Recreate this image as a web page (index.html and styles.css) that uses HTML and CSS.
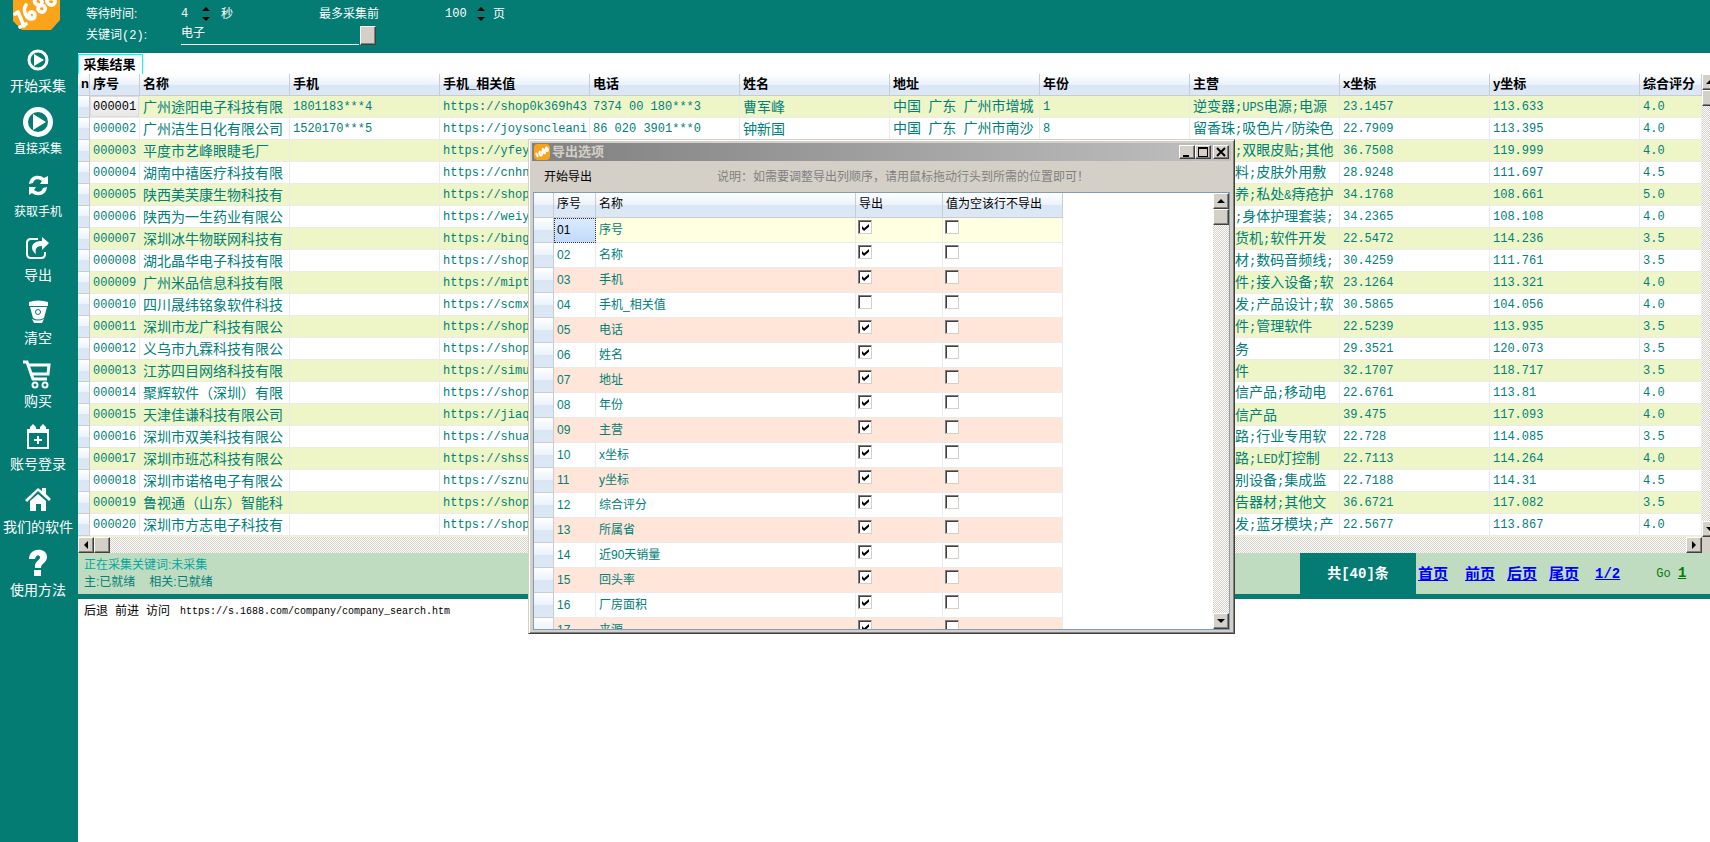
FILE: index.html
```html
<!DOCTYPE html>
<html lang="zh-CN">
<head>
<meta charset="utf-8">
<title>采集结果</title>
<link rel="stylesheet" href="styles.css">
</head>
<body>
<div class="app">
<nav class="side">
  <svg class="logo" width="48" height="30" viewBox="0 0 48 30" aria-hidden="true"><path d="M0 0H47V20L38 30H9L0 21Z" fill="#faa41c"/><g fill="none" stroke="#fff" stroke-width="3.600" stroke-linecap="round" stroke-linejoin="round"><path d="M2 14L5 12L11 26M7 27L13 24"/><path d="M13 5C9 11 14 19 18 19C23 19 23 12 19 12C16 12 15 14 17 17"/><path d="M24 -2C19 1 23 6 27 5C31 3 28 -2 24 -2M27 6C23 8 26 13 30 12C35 9 31 4 27 6"/><path d="M34 -5C32 3 37 7 41 4C44 1 40 -3 36 -1"/></g></svg>
  <ul class="menu">
    <li><button type="button"><svg viewBox="0 0 32 32"><circle cx="16" cy="16" r="9" fill="none" stroke="#fff" stroke-width="3"/><path d="M12 10L22 16L12 22Z"/></svg><span>开始采集</span></button></li>
    <li><button type="button" class="small"><svg viewBox="0 0 32 32"><circle cx="16" cy="15" r="12.500" fill="none" stroke="#fff" stroke-width="5"/><path d="M11 7L24 15L11 23Z"/></svg><span>直接采集</span></button></li>
    <li><button type="button" class="small"><svg viewBox="0 0 32 32"><path d="M7 14C8 5 17 4 22 8L26 6V14H18L20 11C16 8 12 9 11 13ZM25 17C24 26 15 27 10 23L7 25V17H14L12 20C16 23 20 22 21 18Z"/></svg><span>获取手机</span></button></li>
    <li><button type="button"><svg viewBox="0 0 32 32"><path d="M16 6H9Q5 6 5 10V21Q5 25 9 25H19Q23 25 23 21V19" fill="none" stroke="#fff" stroke-width="2"/><path d="M20 4L27 10L20 17V13C14 13 13 16 14 21C8 17 8 8 20 8Z"/></svg><span>导出</span></button></li>
    <li><button type="button"><svg viewBox="0 0 32 32"><path d="M7 6Q16 3 26 6V10H7ZM8 11H25L22 22Q16 25 11 22ZM10 23Q16 26 22 23L20 27H12Z"/><circle cx="16" cy="16" r="2.500" fill="none" stroke="#047c74" stroke-width="1"/></svg><span>清空</span></button></li>
    <li><button type="button"><svg viewBox="0 0 32 32"><path d="M1 3H5L11 20H25" fill="none" stroke="#fff" stroke-width="3"/><path d="M7 6H27L26 15H10" fill="none" stroke="#fff" stroke-width="3"/><circle cx="13" cy="26" r="2.500" fill="none" stroke="#fff" stroke-width="2"/><circle cx="23" cy="26" r="2.500" fill="none" stroke="#fff" stroke-width="2"/></svg><span>购买</span></button></li>
    <li><button type="button"><svg viewBox="0 0 32 32"><path d="M6 8H26V26H6Z" fill="none" stroke="#fff" stroke-width="2"/><path d="M5 7H27V11H5ZM8 5L11 2L14 5V8H8ZM18 5L21 2L24 5V8H18Z"/><path d="M16 14V22M12 18H20" stroke="#fff" stroke-width="2"/></svg><span>账号登录</span></button></li>
    <li><button type="button"><svg viewBox="0 0 32 32"><path d="M3 15L16 3L20 6V3H24V9L29 14L27 16L16 6L5 17ZM8 16L16 9L24 16V26H19V19H14V26H8Z"/></svg><span>我们的软件</span></button></li>
    <li><button type="button"><svg viewBox="0 0 32 32"><path d="M7 11C7 -1 25 -1 25 9C25 15 19 15 19 20H13C12 13 19 12 18 9C17 6 14 7 13 11ZM12 22H19V28H12Z"/></svg><span>使用方法</span></button></li>
  </ul>
</nav>
<main class="main">
  <form class="top">
    <label for="wait">等待时间:</label>
    <div class="field"><input id="wait" class="num" value="4"><button type="button" class="spin" aria-label="调整等待时间"><svg width="8" height="14" viewBox="0 0 8 14"><path d="M0 4L4 0L8 4ZM0 10H8L4 14Z"/></svg></button><span>秒</span></div>
    <label for="pages">最多采集前</label>
    <div class="field"><input id="pages" class="num" value="100"><button type="button" class="spin" aria-label="调整页数"><svg width="8" height="14" viewBox="0 0 8 14"><path d="M0 4L4 0L8 4ZM0 10H8L4 14Z"/></svg></button><span>页</span></div>
    <label for="kw">关键词<span class="en">(2)</span>:</label>
    <div class="field kw"><input id="kw" value="电子"><button type="button" class="bevel pick" aria-label="选择关键词"></button></div>
  </form>
  <div class="tabs"><button type="button" class="tab">采集结果</button></div>
  <section class="results">
    <div class="grid">
    <table class="data">
      <colgroup><col class="c-n"><col class="c-id"><col><col><col><col><col><col><col><col><col><col><col class="c-last"></colgroup>
      <thead><tr><th class="n">n</th><th>序号</th><th>名称</th><th>手机</th><th>手机_相关值</th><th>电话</th><th>姓名</th><th>地址</th><th>年份</th><th>主营</th><th>x坐标</th><th>y坐标</th><th>综合评分</th></tr></thead>
      <tbody>
      <tr><td></td><td class="en cur">000001</td><td>广州途阳电子科技有限</td><td class="en">1801183***4</td><td class="en">https://shop0k369h43</td><td class="en">7374 00 180***3</td><td>曹军峰</td><td>中国<span class="en"> </span>广东<span class="en"> </span>广州市增城</td><td class="en">1</td><td>逆变器<span class="en">;UPS</span>电源<span class="en">;</span>电源</td><td class="en">23.1457</td><td class="en">113.633</td><td class="en">4.0</td></tr>
      <tr><td></td><td class="en">000002</td><td>广州洁生日化有限公司</td><td class="en">1520170***5</td><td class="en">https://joysoncleani</td><td class="en">86 020 3901***0</td><td>钟新国</td><td>中国<span class="en"> </span>广东<span class="en"> </span>广州市南沙</td><td class="en">8</td><td>留香珠<span class="en">;</span>吸色片<span class="en">/</span>防染色</td><td class="en">22.7909</td><td class="en">113.395</td><td class="en">4.0</td></tr>
      <tr><td></td><td class="en">000003</td><td>平度市艺峰眼睫毛厂</td><td></td><td class="en">https://yfey</td><td></td><td></td><td></td><td></td><td>假睫毛<span class="en">;</span>双眼皮贴<span class="en">;</span>其他</td><td class="en">36.7508</td><td class="en">119.999</td><td class="en">4.0</td></tr>
      <tr><td></td><td class="en">000004</td><td>湖南中禧医疗科技有限</td><td></td><td class="en">https://cnhn</td><td></td><td></td><td></td><td></td><td>医用敷料<span class="en">;</span>皮肤外用敷</td><td class="en">28.9248</td><td class="en">111.697</td><td class="en">4.5</td></tr>
      <tr><td></td><td class="en">000005</td><td>陕西美芙康生物科技有</td><td></td><td class="en">https://shop</td><td></td><td></td><td></td><td></td><td>女性保养<span class="en">;</span>私处<span class="en">&amp;</span>痔疮护</td><td class="en">34.1768</td><td class="en">108.661</td><td class="en">5.0</td></tr>
      <tr><td></td><td class="en">000006</td><td>陕西为一生药业有限公</td><td></td><td class="en">https://weiy</td><td></td><td></td><td></td><td></td><td>护发素<span class="en">;</span>身体护理套装<span class="en">;</span></td><td class="en">34.2365</td><td class="en">108.108</td><td class="en">4.0</td></tr>
      <tr><td></td><td class="en">000007</td><td>深圳冰牛物联网科技有</td><td></td><td class="en">https://bingn</td><td></td><td></td><td></td><td></td><td>自动售货机<span class="en">;</span>软件开发</td><td class="en">22.5472</td><td class="en">114.236</td><td class="en">3.5</td></tr>
      <tr><td></td><td class="en">000008</td><td>湖北晶华电子科技有限</td><td></td><td class="en">https://shop</td><td></td><td></td><td></td><td></td><td>音响器材<span class="en">;</span>数码音频线<span class="en">;</span></td><td class="en">30.4259</td><td class="en">111.761</td><td class="en">3.5</td></tr>
      <tr><td></td><td class="en">000009</td><td>广州米品信息科技有限</td><td></td><td class="en">https://mipt</td><td></td><td></td><td></td><td></td><td>网络配件<span class="en">;</span>接入设备<span class="en">;</span>软</td><td class="en">23.1264</td><td class="en">113.321</td><td class="en">4.0</td></tr>
      <tr><td></td><td class="en">000010</td><td>四川晟纬铭象软件科技</td><td></td><td class="en">https://scmxl</td><td></td><td></td><td></td><td></td><td>软件开发<span class="en">;</span>产品设计<span class="en">;</span>软</td><td class="en">30.5865</td><td class="en">104.056</td><td class="en">4.0</td></tr>
      <tr><td></td><td class="en">000011</td><td>深圳市龙广科技有限公</td><td></td><td class="en">https://shop5</td><td></td><td></td><td></td><td></td><td>办公软件<span class="en">;</span>管理软件</td><td class="en">22.5239</td><td class="en">113.935</td><td class="en">3.5</td></tr>
      <tr><td></td><td class="en">000012</td><td>义乌市九霖科技有限公</td><td></td><td class="en">https://shop0</td><td></td><td></td><td></td><td></td><td>技术服务</td><td class="en">29.3521</td><td class="en">120.073</td><td class="en">3.5</td></tr>
      <tr><td></td><td class="en">000013</td><td>江苏四目网络科技有限</td><td></td><td class="en">https://simu</td><td></td><td></td><td></td><td></td><td>应用软件</td><td class="en">32.1707</td><td class="en">118.717</td><td class="en">3.5</td></tr>
      <tr><td></td><td class="en">000014</td><td>聚辉软件（深圳）有限</td><td></td><td class="en">https://shop</td><td></td><td></td><td></td><td></td><td>其他通信产品<span class="en">;</span>移动电</td><td class="en">22.6761</td><td class="en">113.81</td><td class="en">4.0</td></tr>
      <tr><td></td><td class="en">000015</td><td>天津佳谦科技有限公司</td><td></td><td class="en">https://jiaq</td><td></td><td></td><td></td><td></td><td>其他通信产品</td><td class="en">39.475</td><td class="en">117.093</td><td class="en">4.0</td></tr>
      <tr><td></td><td class="en">000016</td><td>深圳市双美科技有限公</td><td></td><td class="en">https://shuan</td><td></td><td></td><td></td><td></td><td>集成电路<span class="en">;</span>行业专用软</td><td class="en">22.728</td><td class="en">114.085</td><td class="en">3.5</td></tr>
      <tr><td></td><td class="en">000017</td><td>深圳市班芯科技有限公</td><td></td><td class="en">https://shssl</td><td></td><td></td><td></td><td></td><td>集成电路<span class="en">;LED</span>灯控制</td><td class="en">22.7113</td><td class="en">114.264</td><td class="en">4.0</td></tr>
      <tr><td></td><td class="en">000018</td><td>深圳市诺格电子有限公</td><td></td><td class="en">https://sznu</td><td></td><td></td><td></td><td></td><td>智能识别设备<span class="en">;</span>集成监</td><td class="en">22.7188</td><td class="en">114.31</td><td class="en">4.5</td></tr>
      <tr><td></td><td class="en">000019</td><td>鲁视通（山东）智能科</td><td></td><td class="en">https://shop</td><td></td><td></td><td></td><td></td><td>其他广告器材<span class="en">;</span>其他文</td><td class="en">36.6721</td><td class="en">117.082</td><td class="en">3.5</td></tr>
      <tr><td></td><td class="en">000020</td><td>深圳市方志电子科技有</td><td></td><td class="en">https://shop</td><td></td><td></td><td></td><td></td><td>软件开发<span class="en">;</span>蓝牙模块<span class="en">;</span>产</td><td class="en">22.5677</td><td class="en">113.867</td><td class="en">4.0</td></tr>
      </tbody>
    </table>
    </div>
    <div class="vbar"><button type="button" class="bevel sb" aria-label="向上"><svg width="8" height="4" viewBox="0 0 8 4"><path d="M0 4L4 0L8 4Z"/></svg></button><div class="bevel sb"></div><button type="button" class="bevel sb end" aria-label="向下"><svg width="8" height="4" viewBox="0 0 8 4"><path d="M0 0H8L4 4Z"/></svg></button></div>
    <div class="hbar"><button type="button" class="bevel sb" aria-label="向左"><svg width="4" height="8" viewBox="0 0 4 8"><path d="M4 0V8L0 4Z"/></svg></button><div class="bevel sb"></div><button type="button" class="bevel sb end" aria-label="向右"><svg width="4" height="8" viewBox="0 0 4 8"><path d="M0 0V8L4 4Z"/></svg></button></div>
    <div class="corner"></div>
  </section>
  <footer class="status">
    <div class="state"><p class="now">正在采集关键词:未采集</p><p class="ready"><span>主:已就绪</span><span>相关:已就绪</span></p></div>
    <div class="total">共<span class="en">[40]</span>条</div>
    <div class="pager"><a href="#first">首页</a><a href="#prev">前页</a><a href="#next">后页</a><a href="#last">尾页</a><a href="#page" class="en">1/2</a><span class="go en">Go <a href="#go">1</a></span></div>
  </footer>
  <div class="nav"><button type="button">后退</button><button type="button">前进</button><button type="button">访问</button><input aria-label="网址" value="https://s.1688.com/company/company_search.htm"></div>
</main>

<div class="dialog" role="dialog" aria-labelledby="dt">
  <div class="title"><svg width="16" height="16" viewBox="0 0 16 16" aria-hidden="true"><rect width="16" height="16" rx="4" fill="#faa41c"/><path d="M2 9L4 13M6 7C4 11 8 13 8 10S5 9 6 8M9 6C7 8 12 11 11 8S8 4 9 6M13 3C10 5 14 9 14 6S12 5 12 5" fill="none" stroke="#fff" stroke-width="2"/></svg><h2 id="dt">导出选项</h2>
    <button type="button" class="bevel" aria-label="最小化"><svg width="10" height="10" viewBox="0 0 10 10"><path d="M1 8H7V10H1Z"/></svg></button><button type="button" class="bevel" aria-label="最大化"><svg width="10" height="10" viewBox="0 0 10 10"><path d="M0 0H10V10H0ZM1 2V9H9V2Z" fill-rule="evenodd"/></svg></button><button type="button" class="bevel close" aria-label="关闭"><svg width="10" height="10" viewBox="0 0 10 10"><path d="M1 1L9 9M9 1L1 9" stroke="#000" stroke-width="2"/></svg></button>
  </div>
  <div class="tools"><button type="button">开始导出</button><p>说明：如需要调整导出列顺序，请用鼠标拖动行头到所需的位置即可！</p></div>
  <div class="frame">
    <div class="view">
    <table class="opts">
      <colgroup><col class="o-h"><col class="o-id"><col class="o-name"><col class="o-out"><col class="o-skip"></colgroup>
      <thead><tr><th></th><th>序号</th><th>名称</th><th>导出</th><th>值为空该行不导出</th></tr></thead>
      <tbody>
      <tr class="sel"><td></td><td>01</td><td>序号</td><td><input type="checkbox" checked aria-label="导出 序号"></td><td><input type="checkbox" aria-label="序号为空不导出"></td></tr>
      <tr><td></td><td>02</td><td>名称</td><td><input type="checkbox" checked aria-label="导出 名称"></td><td><input type="checkbox" aria-label="名称为空不导出"></td></tr>
      <tr><td></td><td>03</td><td>手机</td><td><input type="checkbox" checked aria-label="导出 手机"></td><td><input type="checkbox" aria-label="手机为空不导出"></td></tr>
      <tr><td></td><td>04</td><td>手机_相关值</td><td><input type="checkbox" aria-label="导出 手机_相关值"></td><td><input type="checkbox" aria-label="手机_相关值为空不导出"></td></tr>
      <tr><td></td><td>05</td><td>电话</td><td><input type="checkbox" checked aria-label="导出 电话"></td><td><input type="checkbox" aria-label="电话为空不导出"></td></tr>
      <tr><td></td><td>06</td><td>姓名</td><td><input type="checkbox" checked aria-label="导出 姓名"></td><td><input type="checkbox" aria-label="姓名为空不导出"></td></tr>
      <tr><td></td><td>07</td><td>地址</td><td><input type="checkbox" checked aria-label="导出 地址"></td><td><input type="checkbox" aria-label="地址为空不导出"></td></tr>
      <tr><td></td><td>08</td><td>年份</td><td><input type="checkbox" checked aria-label="导出 年份"></td><td><input type="checkbox" aria-label="年份为空不导出"></td></tr>
      <tr><td></td><td>09</td><td>主营</td><td><input type="checkbox" checked aria-label="导出 主营"></td><td><input type="checkbox" aria-label="主营为空不导出"></td></tr>
      <tr><td></td><td>10</td><td>x坐标</td><td><input type="checkbox" checked aria-label="导出 x坐标"></td><td><input type="checkbox" aria-label="x坐标为空不导出"></td></tr>
      <tr><td></td><td>11</td><td>y坐标</td><td><input type="checkbox" checked aria-label="导出 y坐标"></td><td><input type="checkbox" aria-label="y坐标为空不导出"></td></tr>
      <tr><td></td><td>12</td><td>综合评分</td><td><input type="checkbox" checked aria-label="导出 综合评分"></td><td><input type="checkbox" aria-label="综合评分为空不导出"></td></tr>
      <tr><td></td><td>13</td><td>所属省</td><td><input type="checkbox" checked aria-label="导出 所属省"></td><td><input type="checkbox" aria-label="所属省为空不导出"></td></tr>
      <tr><td></td><td>14</td><td>近90天销量</td><td><input type="checkbox" checked aria-label="导出 近90天销量"></td><td><input type="checkbox" aria-label="近90天销量为空不导出"></td></tr>
      <tr><td></td><td>15</td><td>回头率</td><td><input type="checkbox" checked aria-label="导出 回头率"></td><td><input type="checkbox" aria-label="回头率为空不导出"></td></tr>
      <tr><td></td><td>16</td><td>厂房面积</td><td><input type="checkbox" checked aria-label="导出 厂房面积"></td><td><input type="checkbox" aria-label="厂房面积为空不导出"></td></tr>
      <tr><td></td><td>17</td><td>来源</td><td><input type="checkbox" checked aria-label="导出 来源"></td><td><input type="checkbox" aria-label="来源为空不导出"></td></tr>
      </tbody>
    </table>
    </div>
    <div class="vbar"><button type="button" class="bevel sb" aria-label="向上"><svg width="8" height="4" viewBox="0 0 8 4"><path d="M0 4L4 0L8 4Z"/></svg></button><div class="bevel sb"></div><button type="button" class="bevel sb end" aria-label="向下"><svg width="8" height="4" viewBox="0 0 8 4"><path d="M0 0H8L4 4Z"/></svg></button></div>
  </div>
</div>
</div>
</body>
</html>
```
FILE: styles.css
```css
:root {
  --teal: #047c74;
  --text: #008078;
  --face: #d4d0c8;
  --head: linear-gradient(#fff, #eaf2fb 50%, #dbe6f4 50%, #dde8f6);
}
* { box-sizing: border-box; }
body {
  margin: 0;
  background: #fff;
  font: 12px/16px "Liberation Sans", "Noto Sans CJK SC", sans-serif;
  color: #000;
}
p, h2, ul { margin: 0; padding: 0; list-style: none; }
button, input { font: inherit; color: inherit; border: 0; padding: 0; margin: 0; background: none; border-radius: 0; min-width: 0; }
svg { display: block; }
.en { font-family: "Liberation Mono", monospace; font-size: 12px; white-space: pre; }

.app { position: relative; display: flex; min-height: 100vh; overflow: hidden; }
.side { width: 78px; flex: none; background: var(--teal); color: #fff; }
.logo { margin: 0 0 14px 13px; }
.menu button { width: 100%; height: 63px; display: flex; flex-direction: column; align-items: center; font-size: 14px; line-height: 20px; white-space: nowrap; padding-right: 2px; }
.menu svg { width: 32px; height: 32px; flex: none; fill: #fff; }
.menu .small { font-size: 12px; }
.main { flex: 1; min-width: 0; display: flex; flex-direction: column; }

.top {
  height: 53px; background: var(--teal); color: #fff; padding: 4px 0 0 8px;
  display: grid; grid-template-columns: 95px 138px 126px 1fr; grid-template-rows: 20px 22px; align-content: start; align-items: center;
}
.field { display: flex; align-items: center; }
.num { width: 18px; height: 18px; font: 12px "Liberation Mono", monospace; }
#pages { width: 28px; }
.spin { width: 24px; display: flex; justify-content: center; }
#pages + .spin { width: 16px; margin-right: 4px; }
#wait + .spin { width: 10px; margin: 0 10px 0 2px; }
.kw { grid-column: span 3; height: 20px; gap: 1px; }
#kw { width: 178px; height: 20px; border-bottom: 1px solid #fff; padding-bottom: 6px; }
.bevel { background: var(--face); border: 1px solid; border-color: #fff #404040 #404040 #fff; box-shadow: inset -1px -1px #808080; }
.pick { width: 16px; height: 19px; }

.tabs { height: 21px; padding-top: 1px; }
.tab { width: 65px; height: 20px; border: 1px solid #00ffff; border-bottom: 0; padding-right: 2px; font-weight: bold; font-size: 13px; line-height: 18px; }

.results { display: grid; grid-template-columns: minmax(0, 1fr) 8px; grid-template-rows: auto 16px; }
.grid { overflow: hidden; padding-bottom: 1px; background: #eef6c8; }
.data, .opts { border-collapse: separate; border-spacing: 0; table-layout: fixed; }
.data { width: 1624px; }
.data col { width: 150px; }
.data .c-n { width: 12px; }
.data .c-id { width: 50px; }
.data .c-last { width: 62px; }
.data th { height: 22px; padding: 0 0 2px 3px; text-align: left; font-size: 13px; line-height: 18px; background: var(--head); border-right: 1px solid #c9cdd3; border-bottom: 1px solid #c9cdd3; white-space: nowrap; }
.data td { height: 22px; padding: 0 0 0 3px; font-size: 14px; line-height: 18px; color: var(--text); border-right: 1px solid #ebebeb; border-bottom: 1px solid #ebebeb; white-space: nowrap; overflow: hidden; background: #fff; }
.data td.en { font-size: 12px; }
.data tr:nth-child(odd) td { background: #eef6c8; }
.data td:first-child, .data tr:nth-child(odd) td:first-child { background: var(--head); border-color: #c9cdd3; }
.data tr:first-child td.cur { background: linear-gradient(#fafafa, #e6e6e6); color: #000; box-shadow: inset 0 0 0 1px #dcdcdc; }
.vbar, .hbar { display: flex; background: repeating-conic-gradient(var(--face) 0 25%, #fff 0 50%) 0 0 / 2px 2px; }
.vbar { flex-direction: column; overflow: hidden; }
.sb { width: 16px; height: 16px; flex: none; display: flex; align-items: center; justify-content: center; }
.vbar .end { margin-top: auto; }
.hbar .end { margin-left: auto; }
.corner { background: var(--face); }

.status { display: flex; background: #c0dcc0; border-bottom: 5px solid var(--teal); height: 46px; }
.state { flex: 1; padding: 4px 0 0 6px; color: var(--text); line-height: 17px; }
.now { color: #00a8a0; }
.ready { display: flex; gap: 14px; }
.total { width: 116px; background: var(--teal); color: #fff; font-size: 14px; font-weight: bold; line-height: 41px; text-align: center; }
.total .en { font-size: 14px; }
.pager { width: 294px; display: flex; align-items: center; padding-left: 2px; font-size: 15px; font-weight: bold; gap: 12px; }
.pager a { color: #00f; text-decoration: underline; }
.pager a:first-child { margin-right: 5px; }
.pager a.en { font-size: 14px; margin-left: 4px; }
.pager .go { color: #008000; font-size: 12px; font-weight: normal; margin-left: 24px; }
.pager .go a { color: #008000; font-weight: bold; font-size: 14px; }
.nav { display: flex; padding: 3px 6px; gap: 7px; line-height: 18px; }
.nav input { flex: 1; margin-left: 3px; font: 10px "Liberation Mono", monospace; }

.dialog {
  position: absolute; left: 528px; top: 139px; width: 707px; height: 495px;
  display: flex; flex-direction: column; padding: 3px; background: var(--face);
  border: 1px solid; border-color: var(--face) #404040 #404040 var(--face);
  box-shadow: inset 1px 1px #fff, inset -1px -1px #808080;
}
.title { height: 18px; flex: none; display: flex; align-items: center; padding: 0 2px; background: linear-gradient(90deg, #808080, #c0c0c0); }
.title h2 { flex: 1; margin-left: 2px; font-size: 13px; line-height: 18px; color: var(--face); }
.title button { width: 16px; height: 14px; display: flex; align-items: center; justify-content: center; }
.title .close { margin-left: 2px; }
.tools { height: 31px; flex: none; display: flex; align-items: center; padding-left: 12px; }
.tools button { width: 173px; text-align: left; }
.tools p { color: #808080; }
.frame { flex: 1; min-height: 0; display: flex; margin: 0 1px; border: 1px solid #7f9db9; background: #fff; }
.view { flex: 1; overflow: hidden; }
.frame .vbar { width: 16px; }
.opts { width: 529px; }
.o-h { width: 20px; }
.o-id { width: 42px; }
.o-name { width: 260px; }
.o-out { width: 87px; }
.o-skip { width: 120px; }
.opts th { height: 25px; padding: 0 0 2px 3px; font-weight: normal; text-align: left; background: var(--head); border-right: 1px solid #c9cdd3; border-bottom: 1px solid #c9cdd3; white-space: nowrap; }
.opts td { height: 25px; padding: 0 0 0 3px; line-height: 16px; color: var(--text); border-right: 1px solid #ebebeb; border-bottom: 1px solid #ebebeb; background: #fff; }
.opts tr:nth-child(odd) td { background: #ffe6d9; }
.opts tr.sel td { background: #ffffe1; }
.opts td:first-child, .opts tr:nth-child(odd) td:first-child { background: var(--head); border-color: #c9cdd3; }
.opts tr.sel td:nth-child(2) { background: linear-gradient(#dcebfc, #c1dbfc); color: #000; outline: 1px dotted #333; outline-offset: -1px; }
.opts td:nth-child(n+4) { padding: 2px 0 0 2px; vertical-align: top; }
.opts input { appearance: none; display: block; width: 14px; height: 14px; background: #fff; border: 1px solid; border-color: #808080 var(--face) var(--face) #808080; box-shadow: inset 1px 1px #404040; }
.opts input:checked::after { content: ""; display: block; margin: 3px 0 0 3px; width: 7px; height: 7px; background: #000; clip-path: polygon(0 30%, 30% 60%, 100% 0, 100% 40%, 30% 100%, 0 70%); }
```
